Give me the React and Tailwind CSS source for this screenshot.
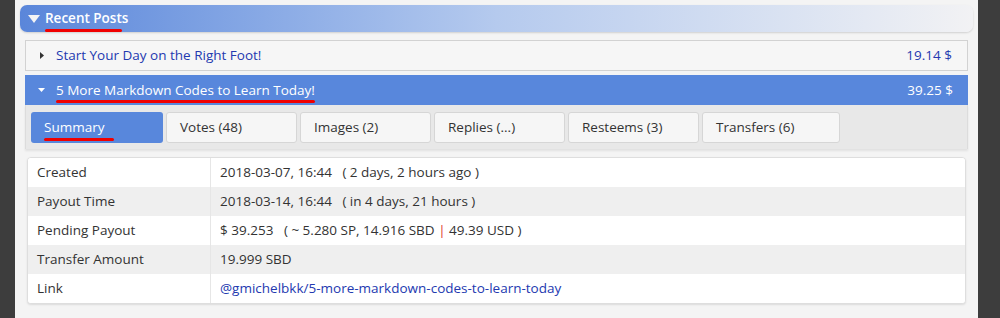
const tabs = ["Summary", "Votes (48)", "Images (2)", "Replies (...)", "Resteems (3)", "Transfers (6)"];

const rows = [
  ["Created", "2018-03-07, 16:44\u00a0\u00a0\u00a0( 2 days, 2 hours ago )"],
  ["Payout Time", "2018-03-14, 16:44\u00a0\u00a0\u00a0( in 4 days, 21 hours )"],
  ["Pending Payout", null],
  ["Transfer Amount", "19.999 SBD"],
  ["Link", "link"],
];

function Mark({ className }) {
  return <span className={"absolute left-0 h-[3px] rounded-full bg-[#f00000] " + className} />;
}

export default function App() {
  return (
    <div className="flex h-[318px] w-[1000px] overflow-hidden text-[13.5px] text-[#333]" style={{ fontFamily: '"Open Sans", sans-serif' }}>
      <div className="w-[15px] shrink-0 bg-[#3d3d3d]" />
      <div className="flex-1 bg-[#f4f4f4] px-[5px] pt-[5px]">
        <div className="flex h-[27px] items-center rounded-[7px] bg-gradient-to-r from-[#5a86da] via-[#b5caee] to-[#f2f2f4] pl-[8px] shadow-[0_1px_2px_rgba(0,0,0,0.15)]">
          <svg width="12" height="8" viewBox="0 0 12 8" className="mr-[5px]">
            <path d="M0 0 L12 0 L6 8 Z" fill="#f4f4f4" />
          </svg>
          <span className="relative text-[13.5px] font-semibold text-white">
            Recent Posts
            <Mark className="-bottom-[3px] w-[77px]" />
          </span>
        </div>

        <div className="mx-[5px] mt-[8px]">
          <div className="flex h-[31px] items-center justify-between border border-[#d2d2d2] bg-[#f6f6f6] pl-[14px] pr-[15px] text-[#2339b0]">
            <div className="flex items-center">
              <svg width="4" height="7" viewBox="0 0 4 7" className="mr-[12px]">
                <path d="M0 0 L4 3.5 L0 7 Z" fill="#333" />
              </svg>
              <span>Start Your Day on the Right Foot!</span>
            </div>
            <span>19.14 $</span>
          </div>

          <div className="mt-[4px] flex h-[30px] items-center justify-between bg-[#5887dc] pl-[13px] pr-[15px] text-white">
            <div className="flex items-center">
              <svg width="7" height="4" viewBox="0 0 7 4" className="mr-[11px]">
                <path d="M0 0 L7 0 L3.5 4 Z" fill="#fff" />
              </svg>
              <span className="relative">
                5 More Markdown Codes to Learn Today!
                <Mark className="-bottom-[3px] -left-[2px] w-[259px]" />
              </span>
            </div>
            <span>39.25 $</span>
          </div>

          <div className="flex h-[44px] items-center gap-[3px] border-x border-[#dcdcdc] bg-[#e8e8e8] pl-[5px] shadow-[0_2px_2px_rgba(0,0,0,0.08)]">
            {tabs.map((t, i) =>
              i === 0 ? (
                <div key={t} className="relative flex h-[31px] w-[132px] items-center rounded-[3px] bg-[#5887dc] pl-[13px] text-white">
                  <span className="relative">
                    {t}
                    <Mark className="-bottom-[4px] -left-[2px] w-[70px]" />
                  </span>
                </div>
              ) : (
                <div key={t} className={"flex h-[31px] items-center rounded-[3px] border border-[#d6d6d6] bg-[#f6f6f6] pl-[13px] " + (i === 5 ? "w-[138px]" : "w-[131px]")}>
                  {t}
                </div>
              )
            )}
          </div>

          <div className="mx-[2px] mt-[8px] overflow-hidden rounded-[4px] border border-[#dedede] bg-white shadow-[0_1px_2px_rgba(0,0,0,0.1)]">
            {rows.map(([label, value], i) => (
              <div key={label} className={"flex h-[29px] items-center " + (i % 2 === 1 ? "bg-[#efefef]" : "bg-white")}>
                <div className="flex h-full w-[183px] items-center border-r border-[#e6e6e6] pl-[9px]">{label}</div>
                <div className="pl-[9px]">
                  {value === null ? (
                    <span>
                      $ 39.253{"\u00a0\u00a0\u00a0"}( ~ 5.280 SP, 14.916 SBD <span className="text-[#e0331f]">|</span> 49.39 USD )
                    </span>
                  ) : value === "link" ? (
                    <span className="text-[#2339b0]">@gmichelbkk/5-more-markdown-codes-to-learn-today</span>
                  ) : (
                    value
                  )}
                </div>
              </div>
            ))}
          </div>
        </div>
      </div>
      <div className="w-[22px] shrink-0 bg-[#3d3d3d]" />
    </div>
  );
}
